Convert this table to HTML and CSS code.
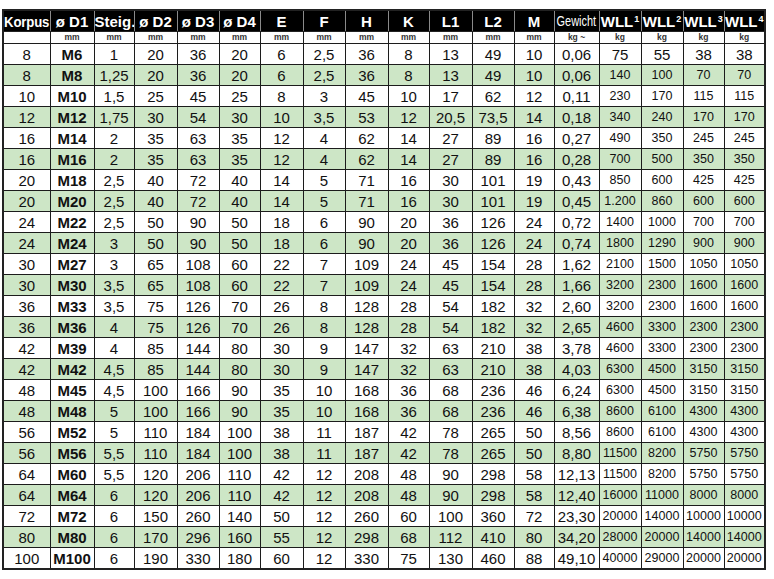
FILE: index.html
```html
<!DOCTYPE html>
<html lang="de">
<head>
<meta charset="utf-8">
<title>Tabelle</title>
<link rel="stylesheet" href="styles.css">
</head>
<body>
<table class="spec">
<colgroup>
<col class="c47"><col class="c44"><col class="c40"><col class="c43"><col class="c42"><col class="c41"><col class="c43"><col class="c42"><col class="c43"><col class="c41"><col class="c43"><col class="c42"><col class="c40"><col class="c45"><col class="c42"><col class="c42"><col class="c41"><col class="c41">
</colgroup>
<thead>
<tr class="head">
<th><span class="narrow">Korpus</span></th><th>ø D1</th><th>Steig.</th><th>ø D2</th><th>ø D3</th><th>ø D4</th><th>E</th><th>F</th><th>H</th><th>K</th><th>L1</th><th>L2</th><th>M</th><th class="gew"><span class="narrow2">Gewicht</span></th><th>WLL<sup>1</sup></th><th>WLL<sup>2</sup></th><th>WLL<sup>3</sup></th><th>WLL<sup>4</sup></th>
</tr>
<tr class="units">
<td></td><td>mm</td><td>mm</td><td>mm</td><td>mm</td><td>mm</td><td>mm</td><td>mm</td><td>mm</td><td>mm</td><td>mm</td><td>mm</td><td>mm</td><td>kg ~</td><td>kg</td><td>kg</td><td>kg</td><td>kg</td>
</tr>
</thead>
<tbody>
<tr class="big"><td>8</td><td class="b">M6</td><td>1</td><td>20</td><td>36</td><td>20</td><td>6</td><td>2,5</td><td>36</td><td>8</td><td>13</td><td>49</td><td>10</td><td>0,06</td><td class="w">75</td><td class="w">55</td><td class="w">38</td><td class="w">38</td></tr>
<tr class="g"><td>8</td><td class="b">M8</td><td>1,25</td><td>20</td><td>36</td><td>20</td><td>6</td><td>2,5</td><td>36</td><td>8</td><td>13</td><td>49</td><td>10</td><td>0,06</td><td class="w">140</td><td class="w">100</td><td class="w">70</td><td class="w">70</td></tr>
<tr><td>10</td><td class="b">M10</td><td>1,5</td><td>25</td><td>45</td><td>25</td><td>8</td><td>3</td><td>45</td><td>10</td><td>17</td><td>62</td><td>12</td><td>0,11</td><td class="w">230</td><td class="w">170</td><td class="w">115</td><td class="w">115</td></tr>
<tr class="g"><td>12</td><td class="b">M12</td><td>1,75</td><td>30</td><td>54</td><td>30</td><td>10</td><td>3,5</td><td>53</td><td>12</td><td>20,5</td><td>73,5</td><td>14</td><td>0,18</td><td class="w">340</td><td class="w">240</td><td class="w">170</td><td class="w">170</td></tr>
<tr><td>16</td><td class="b">M14</td><td>2</td><td>35</td><td>63</td><td>35</td><td>12</td><td>4</td><td>62</td><td>14</td><td>27</td><td>89</td><td>16</td><td>0,27</td><td class="w">490</td><td class="w">350</td><td class="w">245</td><td class="w">245</td></tr>
<tr class="g"><td>16</td><td class="b">M16</td><td>2</td><td>35</td><td>63</td><td>35</td><td>12</td><td>4</td><td>62</td><td>14</td><td>27</td><td>89</td><td>16</td><td>0,28</td><td class="w">700</td><td class="w">500</td><td class="w">350</td><td class="w">350</td></tr>
<tr><td>20</td><td class="b">M18</td><td>2,5</td><td>40</td><td>72</td><td>40</td><td>14</td><td>5</td><td>71</td><td>16</td><td>30</td><td>101</td><td>19</td><td>0,43</td><td class="w">850</td><td class="w">600</td><td class="w">425</td><td class="w">425</td></tr>
<tr class="g"><td>20</td><td class="b">M20</td><td>2,5</td><td>40</td><td>72</td><td>40</td><td>14</td><td>5</td><td>71</td><td>16</td><td>30</td><td>101</td><td>19</td><td>0,45</td><td class="w">1.200</td><td class="w">860</td><td class="w">600</td><td class="w">600</td></tr>
<tr><td>24</td><td class="b">M22</td><td>2,5</td><td>50</td><td>90</td><td>50</td><td>18</td><td>6</td><td>90</td><td>20</td><td>36</td><td>126</td><td>24</td><td>0,72</td><td class="w">1400</td><td class="w">1000</td><td class="w">700</td><td class="w">700</td></tr>
<tr class="g"><td>24</td><td class="b">M24</td><td>3</td><td>50</td><td>90</td><td>50</td><td>18</td><td>6</td><td>90</td><td>20</td><td>36</td><td>126</td><td>24</td><td>0,74</td><td class="w">1800</td><td class="w">1290</td><td class="w">900</td><td class="w">900</td></tr>
<tr><td>30</td><td class="b">M27</td><td>3</td><td>65</td><td>108</td><td>60</td><td>22</td><td>7</td><td>109</td><td>24</td><td>45</td><td>154</td><td>28</td><td>1,62</td><td class="w">2100</td><td class="w">1500</td><td class="w">1050</td><td class="w">1050</td></tr>
<tr class="g"><td>30</td><td class="b">M30</td><td>3,5</td><td>65</td><td>108</td><td>60</td><td>22</td><td>7</td><td>109</td><td>24</td><td>45</td><td>154</td><td>28</td><td>1,66</td><td class="w">3200</td><td class="w">2300</td><td class="w">1600</td><td class="w">1600</td></tr>
<tr><td>36</td><td class="b">M33</td><td>3,5</td><td>75</td><td>126</td><td>70</td><td>26</td><td>8</td><td>128</td><td>28</td><td>54</td><td>182</td><td>32</td><td>2,60</td><td class="w">3200</td><td class="w">2300</td><td class="w">1600</td><td class="w">1600</td></tr>
<tr class="g"><td>36</td><td class="b">M36</td><td>4</td><td>75</td><td>126</td><td>70</td><td>26</td><td>8</td><td>128</td><td>28</td><td>54</td><td>182</td><td>32</td><td>2,65</td><td class="w">4600</td><td class="w">3300</td><td class="w">2300</td><td class="w">2300</td></tr>
<tr><td>42</td><td class="b">M39</td><td>4</td><td>85</td><td>144</td><td>80</td><td>30</td><td>9</td><td>147</td><td>32</td><td>63</td><td>210</td><td>38</td><td>3,78</td><td class="w">4600</td><td class="w">3300</td><td class="w">2300</td><td class="w">2300</td></tr>
<tr class="g"><td>42</td><td class="b">M42</td><td>4,5</td><td>85</td><td>144</td><td>80</td><td>30</td><td>9</td><td>147</td><td>32</td><td>63</td><td>210</td><td>38</td><td>4,03</td><td class="w">6300</td><td class="w">4500</td><td class="w">3150</td><td class="w">3150</td></tr>
<tr><td>48</td><td class="b">M45</td><td>4,5</td><td>100</td><td>166</td><td>90</td><td>35</td><td>10</td><td>168</td><td>36</td><td>68</td><td>236</td><td>46</td><td>6,24</td><td class="w">6300</td><td class="w">4500</td><td class="w">3150</td><td class="w">3150</td></tr>
<tr class="g"><td>48</td><td class="b">M48</td><td>5</td><td>100</td><td>166</td><td>90</td><td>35</td><td>10</td><td>168</td><td>36</td><td>68</td><td>236</td><td>46</td><td>6,38</td><td class="w">8600</td><td class="w">6100</td><td class="w">4300</td><td class="w">4300</td></tr>
<tr><td>56</td><td class="b">M52</td><td>5</td><td>110</td><td>184</td><td>100</td><td>38</td><td>11</td><td>187</td><td>42</td><td>78</td><td>265</td><td>50</td><td>8,56</td><td class="w">8600</td><td class="w">6100</td><td class="w">4300</td><td class="w">4300</td></tr>
<tr class="g"><td>56</td><td class="b">M56</td><td>5,5</td><td>110</td><td>184</td><td>100</td><td>38</td><td>11</td><td>187</td><td>42</td><td>78</td><td>265</td><td>50</td><td>8,80</td><td class="w">11500</td><td class="w">8200</td><td class="w">5750</td><td class="w">5750</td></tr>
<tr><td>64</td><td class="b">M60</td><td>5,5</td><td>120</td><td>206</td><td>110</td><td>42</td><td>12</td><td>208</td><td>48</td><td>90</td><td>298</td><td>58</td><td>12,13</td><td class="w">11500</td><td class="w">8200</td><td class="w">5750</td><td class="w">5750</td></tr>
<tr class="g"><td>64</td><td class="b">M64</td><td>6</td><td>120</td><td>206</td><td>110</td><td>42</td><td>12</td><td>208</td><td>48</td><td>90</td><td>298</td><td>58</td><td>12,40</td><td class="w">16000</td><td class="w">11000</td><td class="w">8000</td><td class="w">8000</td></tr>
<tr><td>72</td><td class="b">M72</td><td>6</td><td>150</td><td>260</td><td>140</td><td>50</td><td>12</td><td>260</td><td>60</td><td>100</td><td>360</td><td>72</td><td>23,30</td><td class="w">20000</td><td class="w">14000</td><td class="w">10000</td><td class="w">10000</td></tr>
<tr class="g"><td>80</td><td class="b">M80</td><td>6</td><td>170</td><td>296</td><td>160</td><td>55</td><td>12</td><td>298</td><td>68</td><td>112</td><td>410</td><td>80</td><td>34,20</td><td class="w">28000</td><td class="w">20000</td><td class="w">14000</td><td class="w">14000</td></tr>
<tr><td>100</td><td class="b">M100</td><td>6</td><td>190</td><td>330</td><td>180</td><td>60</td><td>12</td><td>330</td><td>75</td><td>130</td><td>460</td><td>88</td><td>49,10</td><td class="w">40000</td><td class="w">29000</td><td class="w">20000</td><td class="w">20000</td></tr>
</tbody>
</table>
</body>
</html>
```
FILE: styles.css
```css
html, body {
  background: #ffffff;
}
body {
  margin: 9px 0 0 2px;
  font-family: "Liberation Sans", Arial, sans-serif;
  color: #111111;
}
.spec {
  border-collapse: collapse;
  table-layout: fixed;
  width: 762px;
  border: 2px solid #222222;
}
.c47 { width: 47px; }
.c44 { width: 44px; }
.c40 { width: 40px; }
.c43 { width: 43px; }
.c42 { width: 42px; }
.c41 { width: 41px; }
.c45 { width: 45px; }

.spec th,
.spec td {
  border: 1px solid #1c1c1c;
  padding: 0;
  text-align: center;
  vertical-align: middle;
  white-space: nowrap;
  overflow: hidden;
  line-height: 1;
}
.head th {
  background: #000000;
  color: #ffffff;
  font-weight: bold;
  font-size: 15px;
  height: 20px;
  border-color: #222222 #8a8a8a;
}
.head th sup {
  font-size: 9px;
  vertical-align: 0;
  position: relative;
  top: -5px;
  margin-left: 1px;
}
.narrow {
  display: inline-block;
  transform: scaleX(0.88);
  letter-spacing: -0.2px;
  margin: 0 -4px;
}
.head .gew {
  font-weight: normal;
  font-size: 14px;
}
.narrow2 {
  display: inline-block;
  transform: scaleX(0.78);
  margin: 0 -6px;
}
.units td {
  height: 11px;
  font-size: 8.5px;
  font-weight: bold;
  color: #333333;
  background: #ffffff;
}
tbody td {
  height: 20px;
  font-size: 15px;
  background: #ffffff;
}
tbody tr.g td {
  background: #cde6c6;
}
tbody td.b {
  font-weight: bold;
}
tbody td.w {
  font-size: 12.5px;
}
tbody tr.big td.w {
  font-size: 15px;
}
```
